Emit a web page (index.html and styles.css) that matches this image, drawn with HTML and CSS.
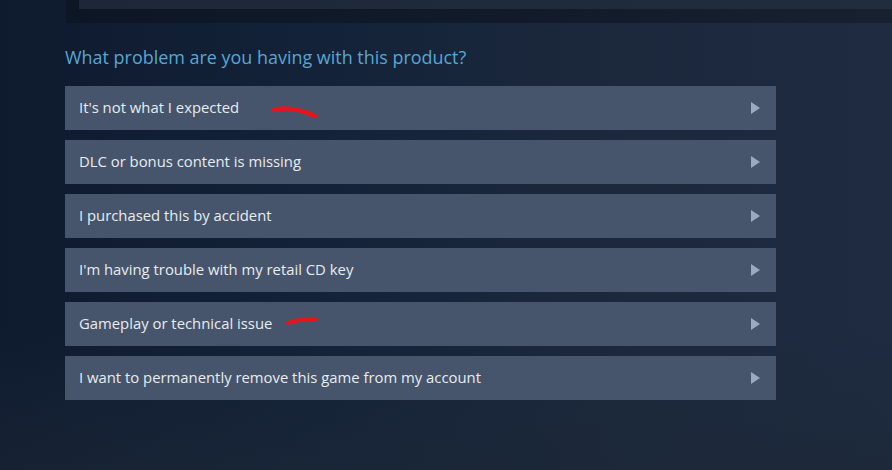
FILE: index.html
```html
<!DOCTYPE html>
<html>
<head>
<meta charset="utf-8">
<link rel="stylesheet" href="styles.css">
</head>
<body>
<div class="page">
  <div class="top-wrap"><div class="top-panel"></div></div>
  <div class="content">
    <h2 class="title">What problem are you having with this product?</h2>
    <div class="options">
      <div class="opt"><span>It's not what I expected</span><span class="arrow"></span>
        <svg class="mark mark1" width="50" height="16" viewBox="0 0 50 16"><path d="M3 5 C14 2, 26 3, 44 11" stroke="#e8141c" stroke-width="4.5" fill="none" stroke-linecap="round"/></svg>
      </div>
      <div class="opt"><span>DLC or bonus content is missing</span><span class="arrow"></span></div>
      <div class="opt"><span>I purchased this by accident</span><span class="arrow"></span></div>
      <div class="opt"><span>I'm having trouble with my retail CD key</span><span class="arrow"></span></div>
      <div class="opt"><span>Gameplay or technical issue</span><span class="arrow"></span>
        <svg class="mark mark2" width="36" height="10" viewBox="0 0 36 10"><path d="M3 7 C10 4, 20 3, 31 3" stroke="#e8141c" stroke-width="4" fill="none" stroke-linecap="round"/></svg>
      </div>
      <div class="opt"><span>I want to permanently remove this game from my account</span><span class="arrow"></span></div>
    </div>
  </div>
</div>
</body>
</html>
```
FILE: styles.css
```css
html, body {
  margin: 0;
  padding: 0;
}
body {
  width: 892px;
  height: 470px;
  overflow: hidden;
  background: linear-gradient(90deg, #0e1a2e 0%, #132238 35%, #1b283c 65%, #1e2b40 100%);
  font-family: "Open Sans", "Liberation Sans", sans-serif;
}
.page {
  height: 470px;
  background: linear-gradient(180deg, rgba(0,0,0,0) 0%, rgba(0,0,0,0) 70%, rgba(28,40,56,0.6) 100%);
}
.top-wrap {
  margin-left: 66px;
  height: 23px;
  background: linear-gradient(90deg, #0c1624 0%, #111b2a 60%, #18212f 100%);
}
.top-panel {
  margin-left: 13px;
  height: 9px;
  background: linear-gradient(90deg, #1d2737 0%, #212c3c 100%);
}
.content {
  padding-left: 65px;
  width: 711px;
}
.title {
  margin: 21px 0 0 0;
  height: 41px;
  font-weight: 400;
  font-size: 17.95px;
  color: #58a6d4;
  line-height: 26px;
}
.options {
  display: flex;
  flex-direction: column;
  gap: 10px;
  margin-top: 1px;
}
.opt {
  position: relative;
  height: 44px;
  background: #46556b;
  display: flex;
  align-items: center;
  justify-content: space-between;
  padding: 0 16px 0 14px;
  color: #e8ecf0;
  font-size: 14.85px;
}
.opt span:first-child {
  position: relative;
  top: -1px;
}
.arrow {
  width: 0;
  height: 0;
  border-top: 6.5px solid transparent;
  border-bottom: 6.5px solid transparent;
  border-left: 9px solid #9aabbf;
}
.mark {
  position: absolute;
}
.mark1 {
  left: 206px;
  top: 19px;
}
.mark2 {
  left: 220px;
  top: 14px;
}
```
